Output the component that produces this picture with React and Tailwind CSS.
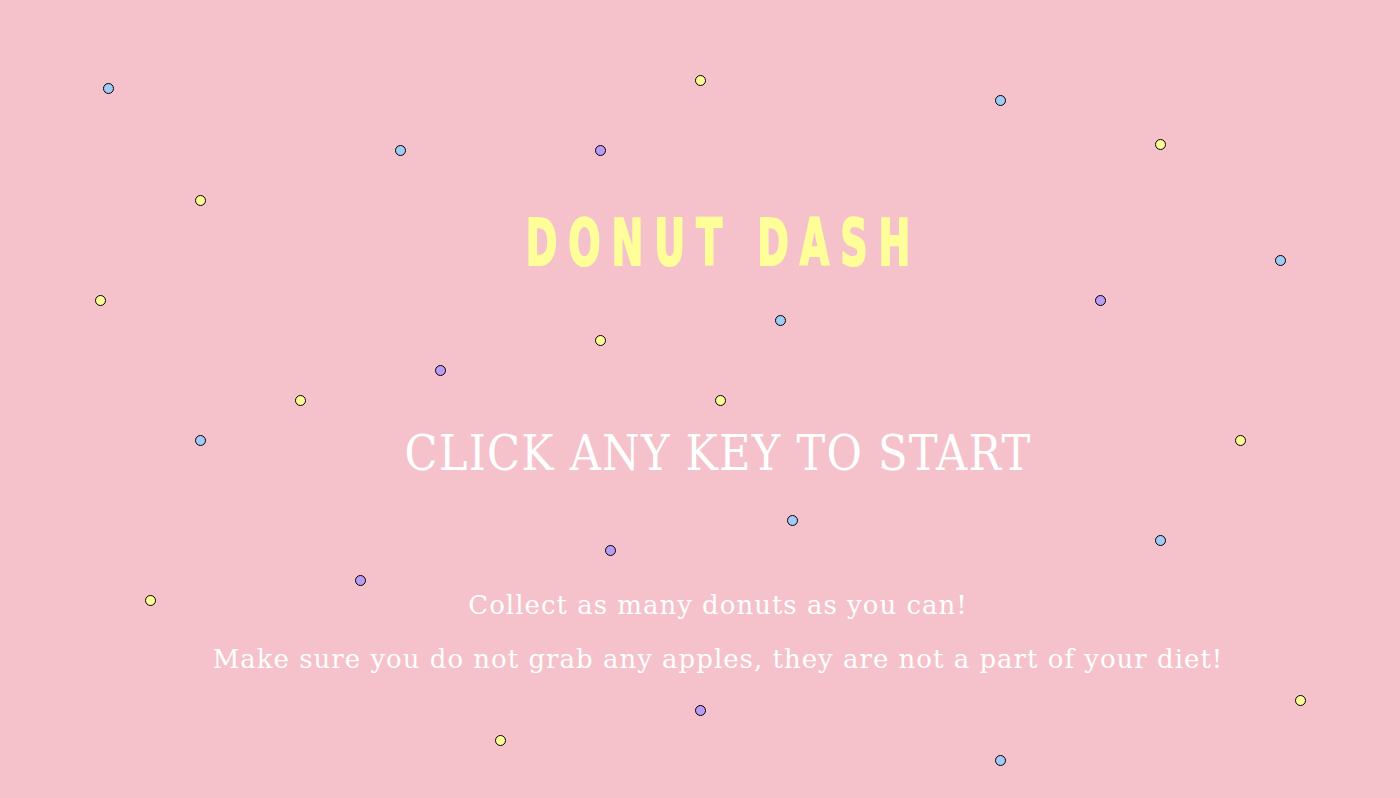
const sprinkles = [
  { x: 108, y: 88, c: "blue" },
  { x: 700, y: 80, c: "yellow" },
  { x: 1000, y: 100, c: "blue" },
  { x: 400, y: 150, c: "blue" },
  { x: 600, y: 150, c: "purple" },
  { x: 1160, y: 144, c: "yellow" },
  { x: 200, y: 200, c: "yellow" },
  { x: 1280, y: 260, c: "blue" },
  { x: 100, y: 300, c: "yellow" },
  { x: 1100, y: 300, c: "purple" },
  { x: 780, y: 320, c: "blue" },
  { x: 600, y: 340, c: "yellow" },
  { x: 440, y: 370, c: "purple" },
  { x: 300, y: 400, c: "yellow" },
  { x: 720, y: 400, c: "yellow" },
  { x: 200, y: 440, c: "blue" },
  { x: 1240, y: 440, c: "yellow" },
  { x: 792, y: 520, c: "blue" },
  { x: 1160, y: 540, c: "blue" },
  { x: 610, y: 550, c: "purple" },
  { x: 360, y: 580, c: "purple" },
  { x: 150, y: 600, c: "yellow" },
  { x: 700, y: 710, c: "purple" },
  { x: 1300, y: 700, c: "yellow" },
  { x: 500, y: 740, c: "yellow" },
  { x: 1000, y: 760, c: "blue" },
];

const colors = {
  blue: "bg-[#a0cbf6]",
  purple: "bg-[#b99cf6]",
  yellow: "bg-[#fdfd98]",
};

// sprinkles sit on a free canvas, so their place comes from the data
function Sprinkle({ x, y, c }) {
  return (
    <span
      className={`absolute w-[11px] h-[11px] -ml-[5.5px] -mt-[5.5px] rounded-full border-[1.5px] border-black ${colors[c]}`}
      style={{ left: x, top: y }}
    />
  );
}

export default function App() {
  return (
    <div className="relative w-full h-[798px] overflow-hidden bg-[#f5c2cb]">
      {sprinkles.map((s, i) => (
        <Sprinkle key={i} {...s} />
      ))}

      <div className="relative flex flex-col items-center pl-[36px] text-center text-white font-['DejaVu_Serif_Condensed','DejaVu_Serif',serif]">
        <h1 className="mt-[203px] inline-block scale-x-[0.66] text-[64px] leading-[80px] font-black tracking-[0.26em] pl-[0.26em] text-[#ffff99] [-webkit-text-stroke:2px_#ffff99] font-[Impact,'Liberation_Sans_Narrow','DejaVu_Sans_Condensed',sans-serif]">
          DONUT DASH
        </h1>

        <p className="mt-[142px] text-[48px] leading-[56px] tracking-[1.2px]">
          CLICK ANY KEY TO START
        </p>

        <div className="mt-[97px] text-[26px] leading-[54px] tracking-[1px] font-['DejaVu_Serif',serif]">
          <p>Collect as many donuts as you can!</p>
          <p>Make sure you do not grab any apples, they are not a part of your diet!</p>
        </div>
      </div>
    </div>
  );
}
